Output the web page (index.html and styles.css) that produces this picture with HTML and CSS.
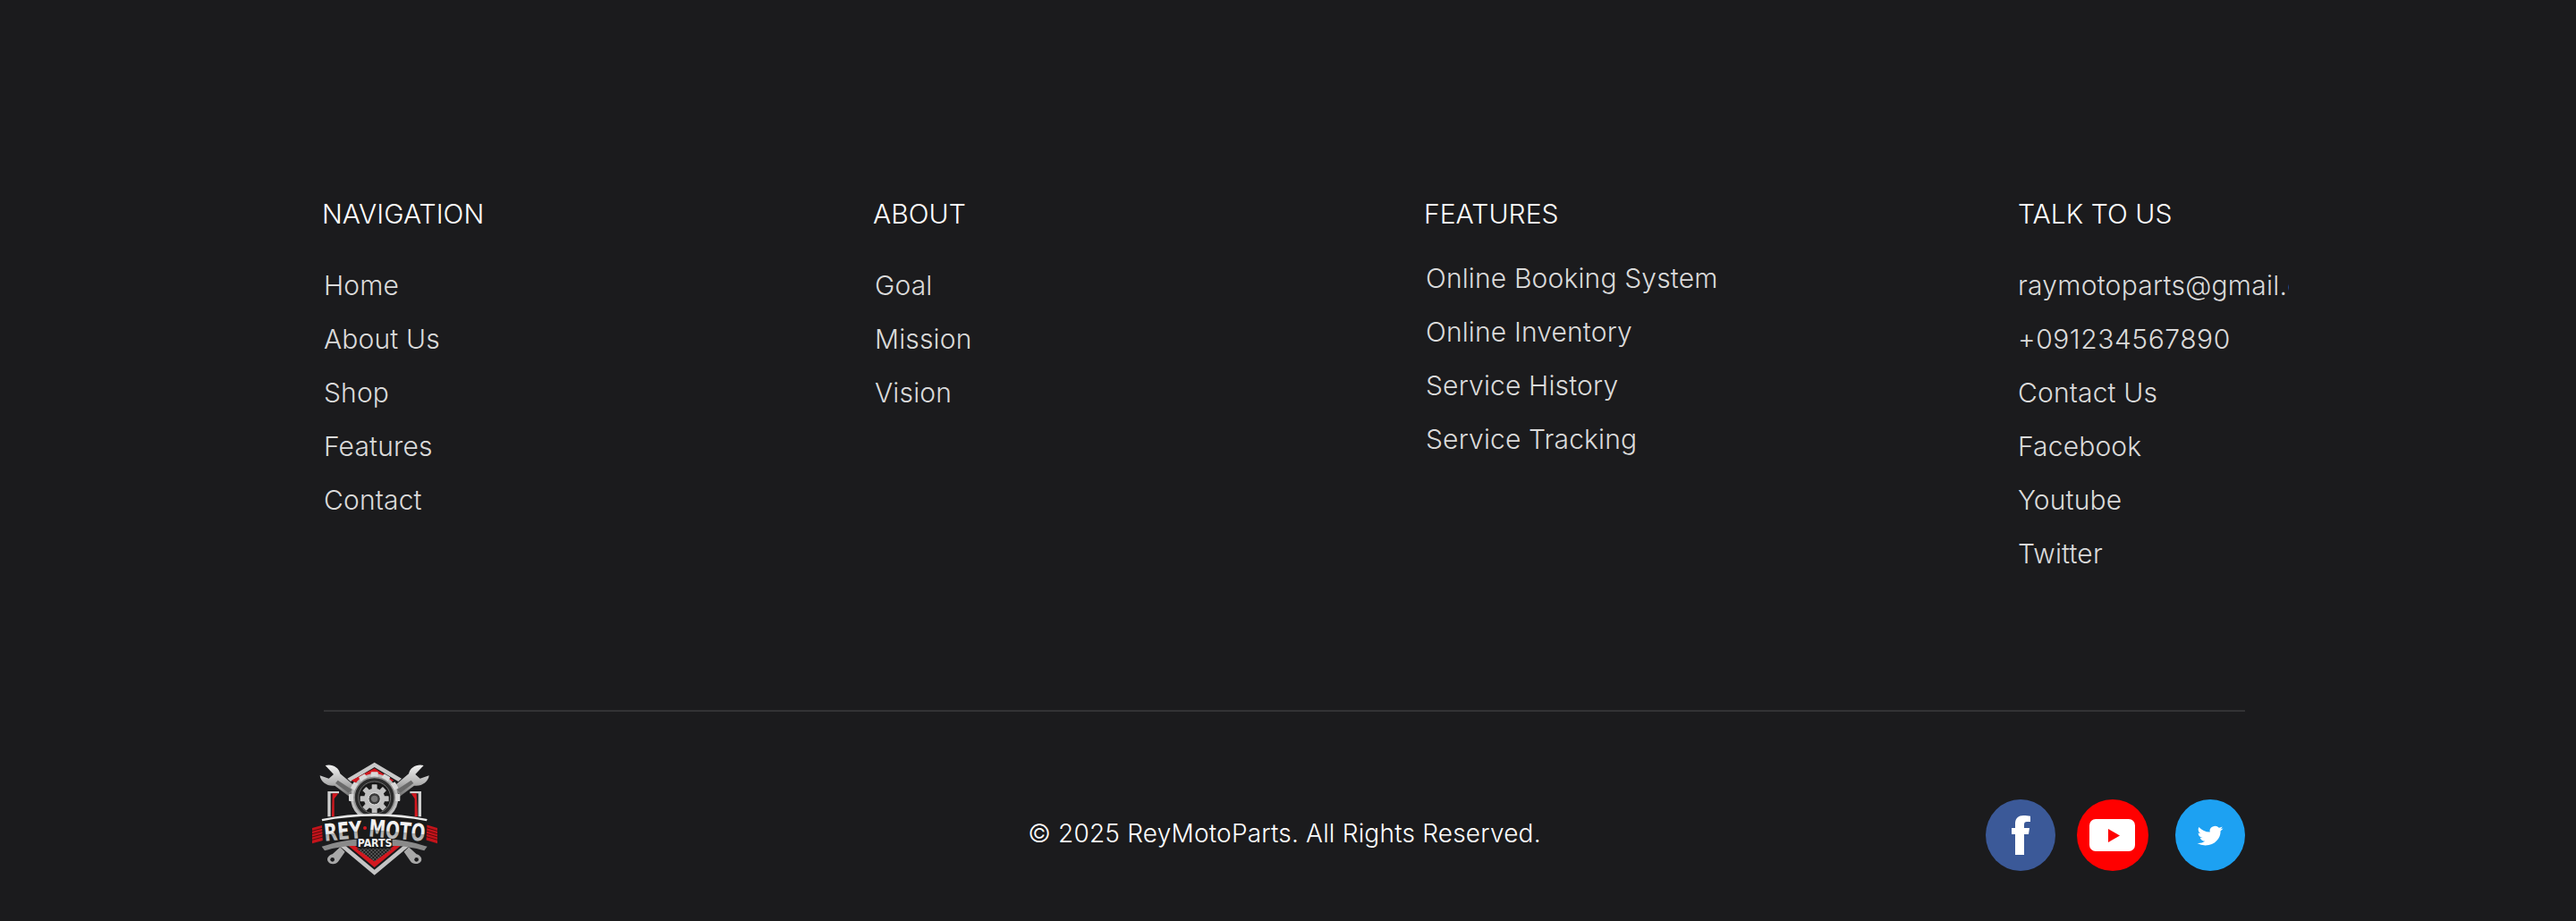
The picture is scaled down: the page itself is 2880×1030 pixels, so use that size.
FILE: index.html
```html
<!DOCTYPE html>
<html lang="en">
<head>
<meta charset="utf-8">
<title>Rey Moto Parts</title>
<link rel="stylesheet" href="styles.css">
</head>
<body>
<footer class="footer">
  <div class="columns">
    <section class="col">
      <h3 class="col-title">NAVIGATION</h3>
      <ul class="links">
        <li>Home</li><li>About Us</li><li>Shop</li><li>Features</li><li>Contact</li>
      </ul>
    </section>
    <section class="col">
      <h3 class="col-title">ABOUT</h3>
      <ul class="links">
        <li>Goal</li><li>Mission</li><li>Vision</li>
      </ul>
    </section>
    <section class="col">
      <h3 class="col-title">FEATURES</h3>
      <ul class="links links-raised">
        <li>Online Booking System</li><li>Online Inventory</li><li>Service History</li><li>Service Tracking</li>
      </ul>
    </section>
    <section class="col col-clip">
      <h3 class="col-title">TALK TO US</h3>
      <ul class="links links-flush">
        <li class="email">raymotoparts@gmail.com</li><li class="wide">+091234567890</li><li>Contact Us</li><li>Facebook</li><li>Youtube</li><li>Twitter</li>
      </ul>
    </section>
  </div>
  <div class="bottom">
    <svg class="logo" viewBox="50 60 440 400" role="img" aria-label="Rey Moto Parts">
      <defs>
        <linearGradient id="steel" x1="0" y1="0" x2="0" y2="1">
          <stop offset="0" stop-color="#f2f2f2"/><stop offset=".55" stop-color="#b5b5b5"/><stop offset="1" stop-color="#6e6e6e"/>
        </linearGradient>
        <linearGradient id="lettering" x1="0" y1="0" x2="0" y2="1">
          <stop offset="0" stop-color="#ffffff"/><stop offset=".55" stop-color="#e8e8e8"/><stop offset=".57" stop-color="#a9a9a9"/><stop offset="1" stop-color="#cfcfcf"/>
        </linearGradient>
        <pattern id="mesh" width="12" height="12" patternUnits="userSpaceOnUse">
          <rect width="12" height="12" fill="#1d1d1d"/><rect width="6" height="6" fill="#565656"/><rect x="6" y="6" width="6" height="6" fill="#565656"/>
        </pattern>
      </defs>
      <path d="M265 68 356 122 345 132 265 84 185 132 174 122Z" fill="#c9c9c9"/>
      <path d="M265 88 330 128 318 136 200 136 188 128Z" fill="#d3181f"/>
      <path d="M108 165H146V172H118V250H108Z" fill="#cfcfcf"/>
      <path d="M422 165H384V172H412V250H422Z" fill="#cfcfcf"/>
      <path d="M124 172H144L130 190V250H122Z" fill="#d3181f"/>
      <path d="M406 172H388L400 190V250H410Z" fill="#d3181f"/>
      <path d="M150 350 265 446 380 350 366 344 265 428 164 344Z" fill="#c4c4c4"/>
      <path d="M168 340 265 420 362 340 340 340 265 400 190 340Z" fill="#d3181f"/>
      <path d="M205 358H325L265 400Z" fill="url(#mesh)"/>
      <g fill="url(#steel)">
        <path d="M100 78C122 72 146 84 150 106L198 146 180 182 132 146C108 150 84 134 82 112L112 122 128 108Z"/>
        <path d="M430 78C408 72 384 84 380 106L332 146 350 182 398 146C422 150 446 134 448 112L418 122 402 108Z"/>
      </g>
      <path d="M142 128 190 160 178 170 134 138Z" fill="#6a6a6a"/>
      <path d="M388 128 340 160 352 170 396 138Z" fill="#6a6a6a"/>
      <g fill="#a8a8a8">
        <path d="M150 352 166 368 144 400C136 412 114 412 108 398 104 386 116 378 124 376Z"/>
        <path d="M380 352 364 368 386 400C394 412 416 410 422 398 426 386 414 378 406 376Z"/>
      </g>
      <circle cx="124" cy="394" r="7" fill="#1b1b1d"/>
      <circle cx="406" cy="394" r="7" fill="#1b1b1d"/>
      <circle cx="265" cy="186" r="80" fill="#bdbdbd"/>
      <g fill="#d8d8d8">
        <rect x="253" y="100" width="24" height="20" rx="3"/>
        <rect x="253" y="100" width="24" height="20" rx="3" transform="rotate(30 265 186)"/>
        <rect x="253" y="100" width="24" height="20" rx="3" transform="rotate(60 265 186)"/>
        <rect x="253" y="100" width="24" height="20" rx="3" transform="rotate(90 265 186)"/>
        <rect x="253" y="100" width="24" height="20" rx="3" transform="rotate(270 265 186)"/>
        <rect x="253" y="100" width="24" height="20" rx="3" transform="rotate(300 265 186)"/>
        <rect x="253" y="100" width="24" height="20" rx="3" transform="rotate(330 265 186)"/>
      </g>
      <circle cx="265" cy="186" r="68" fill="#2a2a2a" stroke="#8f8f8f" stroke-width="5"/>
      <circle cx="265" cy="186" r="54" fill="#181818" stroke="#6f6f6f" stroke-width="3"/>
      <circle cx="265" cy="190" r="35" fill="#c0c0c0"/>
      <g fill="#c0c0c0">
        <rect x="256" y="142" width="18" height="16" rx="2"/>
        <rect x="256" y="142" width="18" height="16" rx="2" transform="rotate(45 265 190)"/>
        <rect x="256" y="142" width="18" height="16" rx="2" transform="rotate(90 265 190)"/>
        <rect x="256" y="142" width="18" height="16" rx="2" transform="rotate(135 265 190)"/>
        <rect x="256" y="142" width="18" height="16" rx="2" transform="rotate(180 265 190)"/>
        <rect x="256" y="142" width="18" height="16" rx="2" transform="rotate(225 265 190)"/>
        <rect x="256" y="142" width="18" height="16" rx="2" transform="rotate(270 265 190)"/>
        <rect x="256" y="142" width="18" height="16" rx="2" transform="rotate(315 265 190)"/>
      </g>
      <circle cx="265" cy="190" r="20" fill="#3b3b3b" stroke="#e2e2e2" stroke-width="3"/>
      <circle cx="265" cy="190" r="11" fill="#777"/>
      <g fill="#c3141b">
        <path d="M56 288 100 276V328L56 340Z"/>
        <path d="M476 288 436 276V328L476 340Z"/>
      </g>
      <g stroke="#5a0a0d" stroke-width="3">
        <path d="M56 298 100 286M56 308 100 296M56 318 100 306M56 328 100 316"/>
        <path d="M476 298 436 286M476 308 436 296M476 318 436 306M476 328 436 316"/>
      </g>
      <path d="M88 262C200 238 330 238 442 262L438 342C330 312 200 312 92 342Z" fill="#1a1a1a"/>
      <path d="M88 258C200 234 330 234 442 258L440 265C330 243 200 243 90 265Z" fill="#e8e8e8"/>
      <path d="M88 350C140 334 175 328 205 326V348C170 348 130 354 98 364Z" fill="#8a8a8a"/>
      <path d="M442 350C390 334 355 328 325 326V348C360 348 400 354 432 364Z" fill="#8a8a8a"/>
      <text class="logo-main" x="98" y="332" textLength="128" lengthAdjust="spacingAndGlyphs" fill="url(#lettering)" transform="rotate(-5 98 332)">REY</text>
      <text class="logo-main" x="244" y="316" textLength="190" lengthAdjust="spacingAndGlyphs" fill="url(#lettering)" transform="rotate(5 244 316)">MOTO</text>
      <circle cx="233" cy="288" r="6" fill="#d3181f"/>
      <text class="logo-sub" x="266" y="351" textLength="116" lengthAdjust="spacingAndGlyphs">PARTS</text>
    </svg>
    <p class="copyright">© 2025 ReyMotoParts. All Rights Reserved.</p>
    <div class="social">
      <svg class="badge badge-fb" viewBox="0 0 78 80" role="img" aria-label="Facebook">
        <ellipse cx="39" cy="40" rx="39" ry="40" fill="#3b5998"/>
        <path d="M33 62V39H29V32H33V27C33 21 37 18 42 18C45 18 48 18.3 50 18.7V25H46C44 25 43 26 43 28V32H49L48 39H43V62Z" fill="#fff"/>
      </svg>
      <svg class="badge badge-yt" viewBox="0 0 80 80" role="img" aria-label="Youtube">
        <circle cx="40" cy="40" r="40" fill="#ff0000"/>
        <rect x="14" y="22" width="51" height="36" rx="7" fill="#fff"/>
        <path d="M35 33V48L48 40.500Z" fill="#ff0000"/>
      </svg>
      <svg class="badge badge-tw" viewBox="0 0 78 80" role="img" aria-label="Twitter">
        <ellipse cx="39" cy="40" rx="39" ry="40" fill="#1da1f2"/>
        <path transform="translate(24.500 27.500) scale(1.21 1.1)" d="M23.953 4.57a10 10 0 01-2.825.775 4.958 4.958 0 002.163-2.723c-.951.555-2.005.959-3.127 1.184a4.92 4.92 0 00-8.384 4.482C7.69 8.095 4.067 6.13 1.64 3.162a4.822 4.822 0 00-.666 2.475c0 1.71.87 3.213 2.188 4.096a4.904 4.904 0 01-2.228-.616v.06a4.923 4.923 0 003.946 4.827 4.996 4.996 0 01-2.212.085 4.936 4.936 0 004.604 3.417 9.867 9.867 0 01-6.102 2.105c-.39 0-.779-.023-1.17-.067a13.995 13.995 0 007.557 2.209c9.053 0 13.998-7.496 13.998-13.985 0-.21 0-.42-.015-.63A9.935 9.935 0 0024 4.59z" fill="#fff"/>
      </svg>
    </div>
  </div>
</footer>
</body>
</html>
```
FILE: styles.css
```css
* { box-sizing: border-box; }
html, body { margin: 0; padding: 0; background: #1b1b1d; }
.footer {
  width: 2880px;
  height: 1030px;
  padding: 220px 370px 0 360px;
  background: #1b1b1d;
  font-family: Inter, "Noto Sans", sans-serif;
  overflow: hidden;
}
.columns {
  display: grid;
  grid-template-columns: 616px 616px 664px 303px;
  height: 574px;
}
.col-clip { overflow: hidden; }
.col-title {
  margin: 0;
  font-size: 30px;
  line-height: 38px;
  font-weight: 350;
  letter-spacing: 0.05px;
  color: #fff;
  white-space: nowrap;
}
.links {
  list-style: none;
  margin: 31px 0 0;
  padding: 0 0 0 2px;
  font-size: 30px;
  line-height: 60px;
  font-weight: 350;
  letter-spacing: 0.15px;
  color: #dadada;
  white-space: nowrap;
}
.links-raised { margin-top: 23px; }
.links-flush { padding-left: 0; }
.wide { letter-spacing: 0.55px; }
.email { letter-spacing: 0.25px; }
.bottom {
  display: grid;
  grid-template-columns: 1fr auto 1fr;
  height: 235px;
  margin-left: 2px;
  border-top: 2px solid #333335;
}
.logo {
  display: block;
  width: 146.670px;
  height: 133.330px;
  margin: 54px 0 0 -15px;
}
.logo-main {
  font-family: "DejaVu Sans", sans-serif;
  font-size: 80px;
  font-weight: 700;
}
.logo-sub {
  font-family: "DejaVu Sans", sans-serif;
  font-size: 35px;
  font-weight: 700;
  text-anchor: middle;
  fill: #f2f2f2;
}
.copyright {
  margin: 118px 0 0;
  font-size: 28px;
  line-height: 36px;
  font-weight: 350;
  letter-spacing: 0.2px;
  color: #fff;
  white-space: nowrap;
}
.social {
  display: flex;
  justify-content: flex-end;
  align-items: flex-start;
  margin-top: 98px;
}
.badge { display: block; height: 80px; }
.badge-fb { width: 78px; }
.badge-yt { width: 80px; margin-left: 24px; }
.badge-tw { width: 78px; margin-left: 30px; }
```
